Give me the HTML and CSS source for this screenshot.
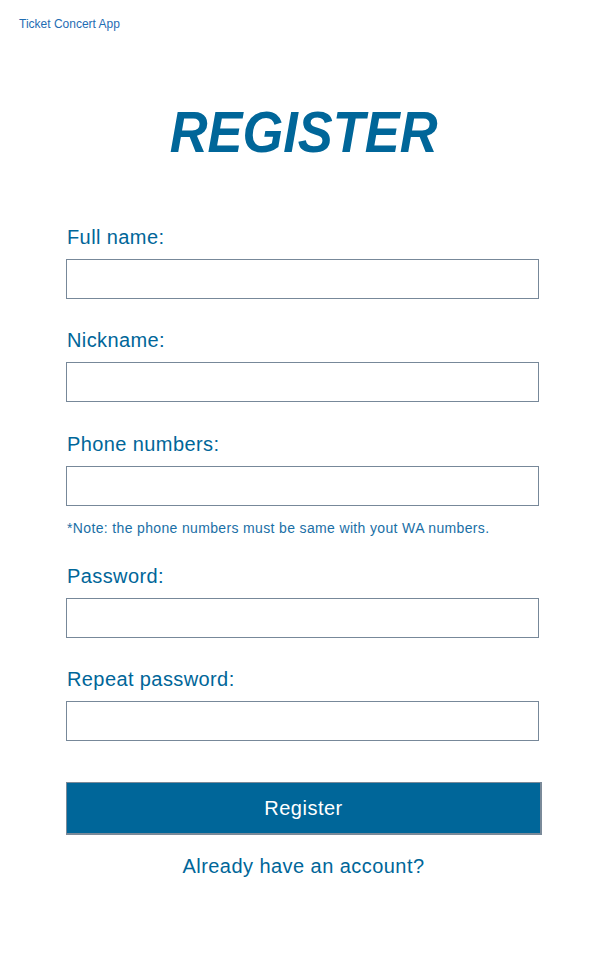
FILE: index.html
```html
<!DOCTYPE html>
<html lang="en">
<head>
<meta charset="utf-8">
<title>Register - Ticket Concert App</title>
<link rel="stylesheet" href="styles.css">
</head>
<body>
  <header class="app-bar">Ticket Concert App</header>
  <main class="page">
    <h1 class="title"><span class="title-text">REGISTER</span></h1>
    <form class="form">
      <div class="field">
        <label class="label" for="fullname">Full name:</label>
        <input class="input" id="fullname" type="text">
      </div>
      <div class="field">
        <label class="label" for="nickname">Nickname:</label>
        <input class="input" id="nickname" type="text">
      </div>
      <div class="field field-noted">
        <label class="label" for="phone">Phone numbers:</label>
        <input class="input" id="phone" type="text">
        <p class="note">*Note: the phone numbers must be same with yout WA numbers.</p>
      </div>
      <div class="field">
        <label class="label" for="password">Password:</label>
        <input class="input" id="password" type="password">
      </div>
      <div class="field">
        <label class="label" for="repeat">Repeat password:</label>
        <input class="input" id="repeat" type="password">
      </div>
      <button class="btn" type="button">Register</button>
      <a class="link" href="#">Already have an account?</a>
    </form>
  </main>
</body>
</html>
```

FILE: styles.css
```css
* {
  box-sizing: border-box;
}

html, body {
  margin: 0;
  padding: 0;
  background: #ffffff;
}

body {
  font-family: "Liberation Sans", Arial, sans-serif;
  color: #006699;
}

.app-bar {
  font-size: 12px;
  line-height: 14px;
  color: #1f6db3;
  padding: 17px 0 0 19px;
}

.page {
  width: 475px;
  margin: 0 auto;
}

.title {
  margin: 73px 0 0;
  font-size: 57px;
  line-height: 57px;
  height: 57px;
  font-weight: bold;
  font-style: italic;
  text-align: center;
  color: #006699;
}

.title-text {
  display: inline-block;
  transform: scaleX(0.92);
  transform-origin: 50% 50%;
}

.form {
  display: flex;
  flex-direction: column;
  margin-top: 64px;
}

.field {
  display: flex;
  flex-direction: column;
  margin-bottom: 29px;
}

.field:first-child + .field {
  margin-bottom: 30px;
}

.field-noted {
  margin-bottom: 28px;
}

.label {
  font-size: 20px;
  line-height: 24px;
  letter-spacing: 0.4px;
  padding-left: 1px;
  margin-bottom: 10px;
}

.input {
  width: 473px;
  height: 40px;
  border: 1px solid #778899;
  border-radius: 0;
  background: #ffffff;
  margin: 0;
  padding: 0 8px;
  font-family: inherit;
  font-size: 16px;
  outline: none;
}

.note {
  margin: 14px 0 0;
  padding-left: 1px;
  font-size: 14px;
  line-height: 16px;
  letter-spacing: 0.35px;
  color: #1a6fa6;
}

.btn {
  margin-top: 12px;
  width: 476px;
  height: 53px;
  background: #006699;
  border: 1px solid #7a8a99;
  border-right-width: 2px;
  border-bottom-width: 2px;
  border-radius: 0;
  color: #ffffff;
  font-family: inherit;
  font-size: 20px;
  letter-spacing: 0.5px;
  cursor: pointer;
}

.link {
  margin-top: 19px;
  align-self: center;
  font-size: 20px;
  line-height: 24px;
  letter-spacing: 0.45px;
  color: #006699;
  text-decoration: none;
}
```
